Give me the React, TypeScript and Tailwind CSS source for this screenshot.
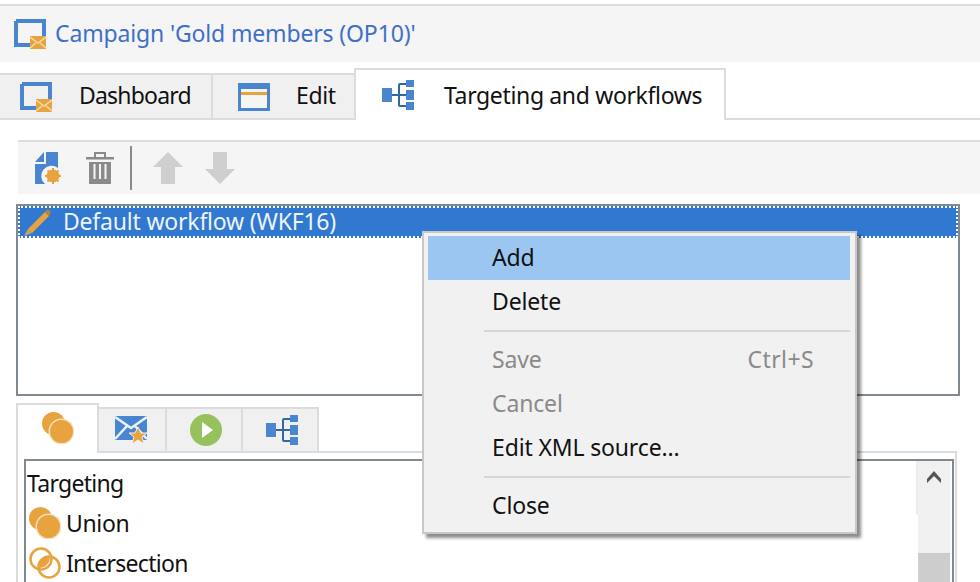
import React from 'react';

const CampaignIcon = () => (
  <svg width="32" height="30" viewBox="0 0 32 30">
    <path d="M2 2h28v16M2 2v24h14" fill="none" stroke="#4a86d0" strokeWidth="4" />
    <rect x="16" y="17" width="16" height="13" fill="#e8a33f" />
    <path d="M16 18l8 6 8-6M16 29l6-5M32 29l-6-5" fill="none" stroke="#f6d9a8" strokeWidth="1.5" />
  </svg>
);

const WindowIcon = () => (
  <svg width="32" height="28" viewBox="0 0 32 28">
    <rect x="1.5" y="1.5" width="29" height="25" fill="#f5f5f5" stroke="#4a86d0" strokeWidth="3" />
    <rect x="3" y="3" width="26" height="3" fill="#4a86d0" />
    <rect x="3" y="9" width="26" height="3" fill="#e8a33f" />
  </svg>
);

const FlowIcon = () => (
  <svg width="32" height="30" viewBox="0 0 32 30">
    <rect x="0" y="8" width="10" height="14" fill="#4a86d0" />
    <path d="M10 15h7M24 4h-6a1 1 0 0 0-1 1v20a1 1 0 0 0 1 1h6M17 15h7" fill="none" stroke="#33679f" strokeWidth="2" />
    <rect x="24" y="0" width="8" height="7" fill="#4a86d0" />
    <rect x="24" y="10" width="8" height="10" fill="#4a86d0" />
    <rect x="24" y="22" width="8" height="8" fill="#4a86d0" />
  </svg>
);

const UnionIcon = () => (
  <svg width="32" height="32" viewBox="0 0 32 32">
    <circle cx="11.5" cy="11.5" r="11.5" fill="#e8a33f" />
    <circle cx="19.5" cy="19.5" r="13" fill="#f5e1bf" />
    <circle cx="19.5" cy="19.5" r="11.5" fill="#e8a33f" />
  </svg>
);

const IntersectionIcon = () => (
  <svg width="32" height="32" viewBox="0 0 32 32">
    <circle cx="12" cy="12" r="10.5" fill="#fff" stroke="#e8a33f" strokeWidth="2.5" />
    <circle cx="20" cy="20" r="10.5" fill="none" stroke="#e8a33f" strokeWidth="2.5" />
    <path d="M10 21a11 11 0 0 1 11-11a11 11 0 0 1-11 11z" fill="#e8a33f" />
  </svg>
);

const NewIcon = () => (
  <svg width="28" height="32" viewBox="0 0 28 32">
    <path d="M1 10L10 0v10z" fill="#4a86d0" />
    <path d="M1 12h11V0h12v16a10 10 0 0 0-13 16H1z" fill="#4a86d0" />
    <circle cx="19" cy="24" r="6.5" fill="#e8a33f" />
    <path d="M19 16v16M11 24h16M13.5 18.5l11 11M24.5 18.5l-11 11" stroke="#e8a33f" strokeWidth="2" />
  </svg>
);

const TrashIcon = () => (
  <svg width="28" height="32" viewBox="0 0 28 32">
    <path d="M9 5V1h10v4" fill="none" stroke="#8a8a8a" strokeWidth="2" />
    <rect x="0" y="5" width="28" height="2.5" fill="#8a8a8a" />
    <path d="M3 10h22v22H3z" fill="#8a8a8a" />
    <path d="M8.5 12v15M14 12v15M19.5 12v15" stroke="#f5f5f5" strokeWidth="2" />
  </svg>
);

const ArrowUp = () => (
  <svg width="30" height="32" viewBox="0 0 30 32">
    <path d="M15 0l15 15H22v17H8V15H0z" fill="#cfcfcf" />
  </svg>
);

const ArrowDown = () => (
  <svg width="30" height="32" viewBox="0 0 30 32">
    <path d="M15 32L0 17h8V0h14v17h8z" fill="#cfcfcf" />
  </svg>
);

const PencilIcon = () => (
  <svg width="30" height="30" viewBox="0 0 30 30">
    <path d="M6 22L23 5l4 4-17 17z" fill="#e8a33f" />
    <path d="M23 5l3-3 3 3-2 4z" fill="#b9822f" />
    <path d="M6 22l4 4-8 3z" fill="#c9a35a" />
  </svg>
);

const MailStarIcon = () => (
  <svg width="32" height="28" viewBox="0 0 32 28">
    <rect x="0" y="0" width="32" height="24" fill="#4a86d0" />
    <path d="M0 1l16 11L32 1M0 23l12-13M32 23L20 10" fill="none" stroke="#eaf1fa" strokeWidth="2.5" />
    <path d="M23 11l3 6h6l-5 4 2 7-6-4-6 4 2-7-5-4h6z" fill="#e8a33f" stroke="#f0f0f0" strokeWidth="1" />
  </svg>
);

const PlayIcon = () => (
  <svg width="32" height="32" viewBox="0 0 32 32">
    <circle cx="16" cy="16" r="16" fill="#97c15c" />
    <path d="M12 8l11 8-11 8z" fill="#fff" />
  </svg>
);

const MenuItem = ({ label, shortcut, disabled, active }: { label: string; shortcut?: string; disabled?: boolean; active?: boolean }) => (
  <div className={`flex h-11 items-center justify-between pb-[2px] pl-[64px] pr-9 tracking-[-0.15px] ${active ? 'bg-[#9cc6f2]' : ''} ${disabled ? 'text-[#8a8a8a]' : 'text-[#111]'}`}>
    <span>{label}</span>
    {shortcut && <span className="tracking-[0.4px]">{shortcut}</span>}
  </div>
);

const App: React.FC = () => {
  return (
    <div className="relative h-[582px] w-[980px] overflow-hidden bg-white text-[23px] leading-none tracking-[-0.35px] text-[#111]" style={{ fontFamily: '"Noto Sans", sans-serif' }}>
      {/* Title */}
      <div className="mt-1 flex h-[58px] items-center gap-[9px] border-t-2 border-[#dcdcdc] bg-[#f5f5f5] pl-[14px] text-[#3f6fc8]">
        <CampaignIcon />
        <span className="pb-[2px] tracking-[-0.15px]">Campaign 'Gold members (OP10)'</span>
      </div>

      {/* Main tabs */}
      <div className="mt-[6px] flex h-[52px] items-end border-b-2 border-[#dcdcdc]">
        <div className="-mb-[2px] flex h-[47px] w-[213px] items-center border-y-2 border-r-2 border-[#dcdcdc] bg-[#f0f0f0] pl-5">
          <CampaignIcon />
          <span className="ml-[27px] pb-[2px] tracking-[-0.8px]">Dashboard</span>
        </div>
        <div className="-mb-[2px] flex h-[47px] w-[141px] items-center border-y-2 border-[#dcdcdc] bg-[#f0f0f0] pl-[25px]">
          <WindowIcon />
          <span className="ml-[26px] pb-[2px]">Edit</span>
        </div>
        <div className="-mb-[2px] flex h-[52px] w-[372px] items-center border-x-2 border-t-2 border-[#dcdcdc] bg-white pl-[26px]">
          <FlowIcon />
          <span className="ml-[30px]">Targeting and workflows</span>
        </div>
      </div>

      {/* Toolbar */}
      <div className="ml-[18px] mt-5 flex h-[54px] items-center border-t-2 border-[#dcdcdc] bg-[#f5f5f5] pl-[16px]">
        <NewIcon />
        <div className="ml-[24px]"><TrashIcon /></div>
        <div className="ml-4 h-11 w-[2px] bg-[#8a8a8a]" />
        <div className="ml-[21px]"><ArrowUp /></div>
        <div className="ml-[22px]"><ArrowDown /></div>
      </div>

      {/* Workflow list */}
      <div className="ml-4 mt-[10px] h-[192px] w-[944px] border-2 border-[#808890]">
        <div className="flex h-8 items-center border-2 border-dotted border-white bg-[#3178d0] pl-[2px] text-[#eef4fc]">
          <PencilIcon />
          <span className="ml-[11px] pb-[2px] tracking-[-0.2px]">Default workflow (WKF16)</span>
        </div>
      </div>

      {/* Lower panel */}
      <div className="ml-4 mt-[7px] w-[941px]">
        <div className="flex h-[50px] items-end border-b-2 border-[#dcdcdc]">
          <div className="-mb-[2px] flex h-[50px] w-[83px] items-center justify-center border-x-2 border-t-2 border-[#dcdcdc] bg-white pb-[2px]">
            <UnionIcon />
          </div>
          <div className="-mb-[2px] flex h-[46px] w-[68px] items-center justify-center border-y-2 border-r-2 border-[#dcdcdc] bg-[#f0f0f0] pr-[2px]">
            <MailStarIcon />
          </div>
          <div className="-mb-[2px] flex h-[46px] w-[76px] items-center justify-center border-y-2 border-r-2 border-[#dcdcdc] bg-[#f0f0f0] pl-[4px]">
            <PlayIcon />
          </div>
          <div className="-mb-[2px] flex h-[46px] w-[76px] items-center justify-center border-y-2 border-r-2 border-[#dcdcdc] bg-[#f0f0f0] pl-[4px]">
            <FlowIcon />
          </div>
        </div>
        <div className="h-[200px] border-x-2 border-[#dcdcdc] pl-[6px] pr-[1px] pt-[6px]">
          <div className="flex h-[200px] border-2 border-[#808890]">
            <div className="flex-1 pl-[1px] pt-[2px]">
              <div className="flex h-[40px] items-center tracking-[-0.7px]">Targeting</div>
              <div className="flex h-[40px] items-center pl-[2px]">
                <UnionIcon />
                <span className="ml-[5px]">Union</span>
              </div>
              <div className="flex h-[40px] items-center pl-[2px]">
                <IntersectionIcon />
                <span className="ml-[5px] tracking-[-0.7px]">Intersection</span>
              </div>
            </div>
            <div className="h-[54px] w-[2px] bg-[#ececec]" />
            <div className="mr-[2px] flex w-[32px] flex-col items-center bg-[#f0f0f0] pt-[10px]">
              <svg width="14" height="12" viewBox="0 0 14 12">
                <path d="M7 0l7 8v4L7 5l-7 7V8z" fill="#555" />
              </svg>
              <div className="mt-[70px] h-[60px] w-full bg-[#cdcdcd]" />
            </div>
          </div>
        </div>
      </div>

      {/* Context menu */}
      <div className="absolute left-[422px] top-[231px] h-[303px] w-[435px] border-2 border-[#c8c8c8] bg-[#f1f1f1] pl-1 pr-[5px] pt-[3px] shadow-[4px_4px_3px_rgba(0,0,0,0.45)]">
        <MenuItem label="Add" active />
        <MenuItem label="Delete" />
        <div className="my-[6px] ml-[56px] h-[2px] bg-[#d6d6d6]" />
        <MenuItem label="Save" shortcut="Ctrl+S" disabled />
        <MenuItem label="Cancel" disabled />
        <MenuItem label="Edit XML source..." />
        <div className="my-[6px] ml-[56px] h-[2px] bg-[#d6d6d6]" />
        <MenuItem label="Close" />
      </div>
    </div>
  );
};

export default App;
